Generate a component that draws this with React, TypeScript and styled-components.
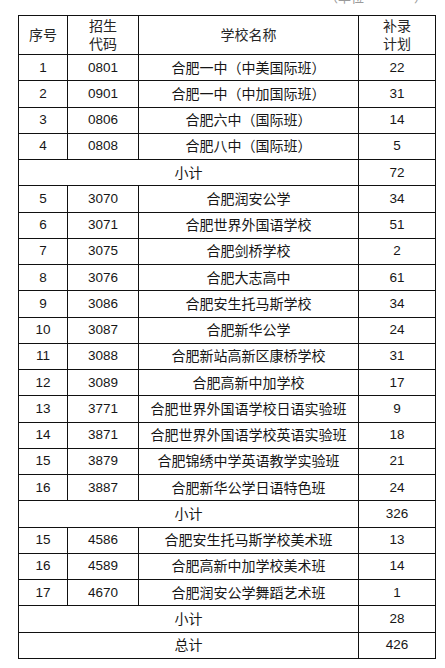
import styled, { createGlobalStyle } from "styled-components";

const GlobalStyle = createGlobalStyle`
  html, body {
    margin: 0;
    padding: 0;
    background: #ffffff;
  }
  body {
    font-family: "Liberation Sans", "Noto Sans CJK SC", sans-serif;
    color: #161616;
  }
`;

type Row =
  | { kind: "item"; no: string; code: string; name: string; plan: string }
  | { kind: "sum"; label: string; plan: string };

const rows: Row[] = [
  { kind: "item", no: "1", code: "0801", name: "合肥一中（中美国际班）", plan: "22" },
  { kind: "item", no: "2", code: "0901", name: "合肥一中（中加国际班）", plan: "31" },
  { kind: "item", no: "3", code: "0806", name: "合肥六中（国际班）", plan: "14" },
  { kind: "item", no: "4", code: "0808", name: "合肥八中（国际班）", plan: "5" },
  { kind: "sum", label: "小计", plan: "72" },
  { kind: "item", no: "5", code: "3070", name: "合肥润安公学", plan: "34" },
  { kind: "item", no: "6", code: "3071", name: "合肥世界外国语学校", plan: "51" },
  { kind: "item", no: "7", code: "3075", name: "合肥剑桥学校", plan: "2" },
  { kind: "item", no: "8", code: "3076", name: "合肥大志高中", plan: "61" },
  { kind: "item", no: "9", code: "3086", name: "合肥安生托马斯学校", plan: "34" },
  { kind: "item", no: "10", code: "3087", name: "合肥新华公学", plan: "24" },
  { kind: "item", no: "11", code: "3088", name: "合肥新站高新区康桥学校", plan: "31" },
  { kind: "item", no: "12", code: "3089", name: "合肥高新中加学校", plan: "17" },
  { kind: "item", no: "13", code: "3771", name: "合肥世界外国语学校日语实验班", plan: "9" },
  { kind: "item", no: "14", code: "3871", name: "合肥世界外国语学校英语实验班", plan: "18" },
  { kind: "item", no: "15", code: "3879", name: "合肥锦绣中学英语教学实验班", plan: "21" },
  { kind: "item", no: "16", code: "3887", name: "合肥新华公学日语特色班", plan: "24" },
  { kind: "sum", label: "小计", plan: "326" },
  { kind: "item", no: "15", code: "4586", name: "合肥安生托马斯学校美术班", plan: "13" },
  { kind: "item", no: "16", code: "4589", name: "合肥高新中加学校美术班", plan: "14" },
  { kind: "item", no: "17", code: "4670", name: "合肥润安公学舞蹈艺术班", plan: "1" },
  { kind: "sum", label: "小计", plan: "28" },
  { kind: "sum", label: "总计", plan: "426" },
];

const Page = styled.div`
  padding-left: 18px;
  width: 417px;
`;

// bottom edge of a caption line that the screenshot crops at the top
const Note = styled.div`
  height: 15px;
  overflow: hidden;
  display: flex;
  justify-content: flex-end;
  gap: 50px;
  padding-right: 8px;
  color: #9a9a9a;
  font-size: 13px;
  line-height: 13px;
  span {
    margin-top: -9px;
  }
`;

const Table = styled.table`
  border-collapse: collapse;
  table-layout: fixed;
  width: 417px;
  font-size: 13.5px;
`;

const Col = styled.col<{ $w: number }>`
  width: ${(p) => p.$w}px;
`;

const Head = styled.th`
  border: 1px solid #111111;
  height: 38px;
  padding: 0;
  font-weight: normal;
  font-size: 14px;
  color: #262626;
  line-height: 18px;
  text-align: center;
  vertical-align: middle;
`;

const Cell = styled.td<{ $cjk?: boolean }>`
  border: 1px solid #111111;
  height: 25.26px;
  padding: 0;
  font-size: ${(p) => (p.$cjk ? "14px" : "13.5px")};
  text-align: center;
  vertical-align: middle;
  white-space: nowrap;
  line-height: 16px;
`;

export default function App() {
  return (
    <>
      <GlobalStyle />
      <Page>
        <Note>
          <span>（单位</span>
          <span>）</span>
        </Note>
        <Table>
          <colgroup>
            <Col $w={49} />
            <Col $w={71} />
            <Col $w={220} />
            <Col $w={77} />
          </colgroup>
          <thead>
            <tr>
              <Head>序号</Head>
              <Head>
                招生
                <br />
                代码
              </Head>
              <Head>学校名称</Head>
              <Head>
                补录
                <br />
                计划
              </Head>
            </tr>
          </thead>
          <tbody>
            {rows.map((r, i) =>
              r.kind === "item" ? (
                <tr key={i}>
                  <Cell>{r.no}</Cell>
                  <Cell>{r.code}</Cell>
                  <Cell $cjk>{r.name}</Cell>
                  <Cell>{r.plan}</Cell>
                </tr>
              ) : (
                <tr key={i}>
                  <Cell colSpan={3} $cjk>
                    {r.label}
                  </Cell>
                  <Cell>{r.plan}</Cell>
                </tr>
              )
            )}
          </tbody>
        </Table>
      </Page>
    </>
  );
}
